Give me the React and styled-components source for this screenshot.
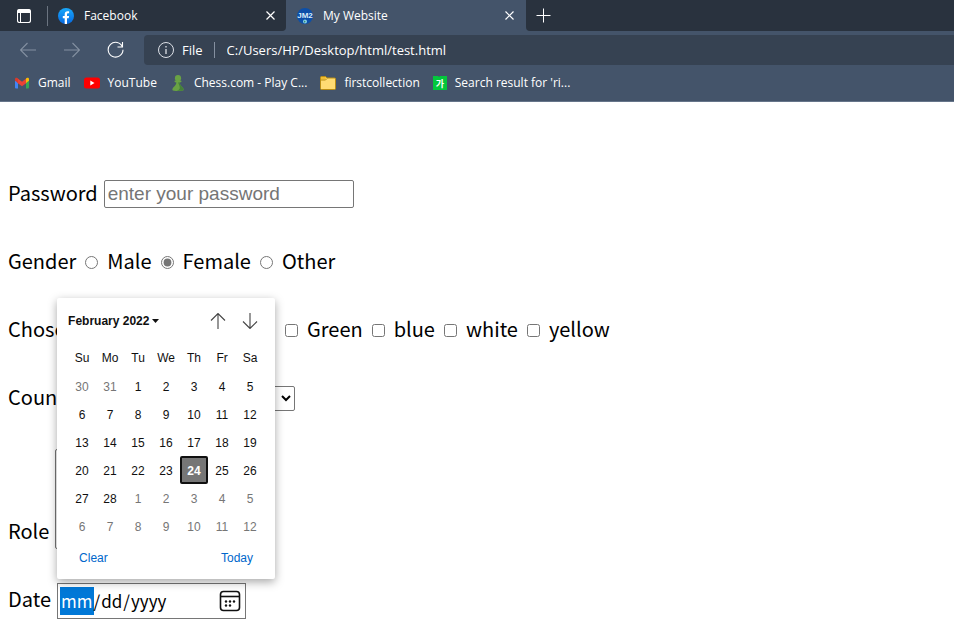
import React, { useState } from "react";
import styled, { createGlobalStyle } from "styled-components";

const GlobalStyle = createGlobalStyle`
  *, *::before, *::after { box-sizing: border-box; }
  body { margin: 0; background: #fff; overflow: hidden; }
`;

const uiFont = `"Open Sans", "Noto Sans", sans-serif`;
const pageFont = `"Noto Sans CJK SC", "Noto Sans", sans-serif`;
const formFont = `"Liberation Sans", Arial, sans-serif`;

const Browser = styled.div`
  display: flex;
  flex-direction: column;
  min-height: 100vh;
  background: #fff;
`;

const Chrome = styled.header`
  background: #44546a;
  border-bottom: 1px solid #66758a;
  color: #fff;
  font: 12px/16px ${uiFont};
`;

const TabStrip = styled.div`
  display: flex;
  height: 31px;
  background: #44546a;
`;

const IconButton = styled.button`
  display: flex;
  align-items: center;
  justify-content: center;
  width: ${(p) => p.$width || 24}px;
  height: 28px;
  padding: 0;
  border: 0;
  background: none;
  color: ${(p) => (p.$dim ? "#8490a1" : "#fff")};
`;

const LeadingTabs = styled.div`
  display: flex;
  align-items: center;
  width: 286px;
  padding: 0 4px 0 12px;
  background: #29323e;
  border-radius: 0 0 4px 0;
`;

const TabDivider = styled.span`
  width: 1px;
  height: 20px;
  margin: 0 10px 0 11px;
  background: #6b7480;
`;

const TabTitle = styled.span`
  flex: 1;
  margin-left: 10px;
  font-size: 12px;
`;

const ActiveTab = styled.div`
  display: flex;
  align-items: center;
  width: 240px;
  padding: 0 5px 0 11px;
  background: #44546a;
`;

const StripRest = styled.div`
  display: flex;
  flex: 1;
  align-items: center;
  padding-left: 5px;
  background: #29323e;
  border-radius: 0 0 0 4px;
`;

const Toolbar = styled.div`
  display: flex;
  align-items: center;
  height: 38px;
  padding-left: 16px;
`;

const NavButtons = styled.div`
  display: flex;
  gap: 20px;
  margin-right: 16px;
`;

const AddressBar = styled.div`
  display: flex;
  flex: 1;
  align-items: center;
  height: 30px;
  padding-left: 14px;
  background: #364252;
  border-radius: 4px 0 0 4px;
  font-size: 13px;
`;

const Scheme = styled.span`
  margin: 0 12px 0 8px;
  padding-right: 11px;
  border-right: 1px solid #8590a0;
`;

const AddressInput = styled.input`
  flex: 1;
  min-width: 0;
  padding: 0;
  border: 0;
  outline: 0;
  background: none;
  color: #fff;
  font: inherit;
`;

const Bookmarks = styled.nav`
  display: flex;
  gap: 13px;
  align-items: center;
  height: 32px;
  padding: 0 14px 4px;
`;

const Bookmark = styled.a`
  display: flex;
  gap: 8px;
  align-items: center;
  color: #fff;
  text-decoration: none;
  white-space: nowrap;
`;

const Form = styled.form`
  display: flex;
  flex-direction: column;
  gap: 34px;
  padding: 75px 8px 0;
  color: #000;
  font: 20px/28px ${pageFont};
`;

const Row = styled.div`
  display: flex;
  align-items: ${(p) => (p.$end ? "flex-end" : "center")};
  min-height: 34px;
`;

const RowLabel = styled.label`
  margin-right: 6px;
  padding-bottom: ${(p) => (p.$end ? 4 : 2)}px;
`;

const DateLabel = styled(RowLabel)`
  padding-bottom: 4px;
`;

const Choice = styled.label`
  display: flex;
  align-items: center;
  margin-right: 9px;
  padding-bottom: 2px;
`;

const ChoiceInput = styled.input`
  width: 13px;
  height: 13px;
  margin: 2px 9px 0 0;
  accent-color: #767676;
`;

const ColourLead = styled.div`
  display: flex;
  align-items: center;
  width: 277px;
  white-space: nowrap;
`;

const PasswordInput = styled.input`
  width: 250px;
  height: 28px;
  padding: 0 3px;
  border: 1px solid #767676;
  border-radius: 2px;
  font: 19px/24px ${formFont};
  &::placeholder { color: #757575; }
`;

const Select = styled.select`
  width: 205px;
  height: 25px;
  border: 1px solid #767676;
  border-radius: 2px;
  background: #fff;
  color: #000;
  font: 16px ${formFont};
`;

const TextArea = styled.textarea`
  width: 196px;
  height: 100px;
  border: 1px solid #767676;
  border-radius: 2px;
  resize: none;
`;

const DateField = styled.div`
  position: relative;
  display: flex;
  align-items: center;
  width: 189px;
  height: 36px;
  padding: 0 3px 0 2px;
  border: 1px solid #767676;
`;

const DateInput = styled.input`
  flex: 1;
  min-width: 0;
  height: 32px;
  padding: 0;
  border: 0;
  outline: 0;
  background: none;
  color: #000;
  font: 17px/28px ${pageFont};
  &::-webkit-calendar-picker-indicator { display: none; }
  &::-webkit-datetime-edit { padding: 0; }
  &::-webkit-datetime-edit-fields-wrapper { padding: 0; }
  &::-webkit-datetime-edit-month-field {
    padding: 3px 1px 6px;
    background: #0078d7;
    color: #fff;
  }
`;

const Popup = styled.div`
  position: absolute;
  bottom: 39px;
  left: -1px;
  width: 218px;
  padding: 7px 9px 8px 11px;
  background: #fff;
  border-radius: 2px;
  box-shadow: 0 3px 10px rgba(0, 0, 0, 0.35);
  font: 12px/16px ${formFont};
`;

const PopupHeader = styled.div`
  display: flex;
  align-items: center;
  height: 32px;
`;

const MonthButton = styled.button`
  display: flex;
  flex: 1;
  gap: 3px;
  align-items: center;
  padding: 0;
  border: 0;
  background: none;
  color: #101010;
  font: bold 12px/16px ${formFont};
`;

const Calendar = styled.table`
  margin-top: 5px;
  border-collapse: collapse;
  table-layout: fixed;
  width: 196px;
`;

const DayName = styled.th`
  height: 30px;
  padding: 2px 0 0;
  color: #101010;
  font-weight: normal;
`;

const DayCell = styled.td`
  height: 28px;
  padding: 0;
`;

const Day = styled.button`
  display: block;
  width: 28px;
  height: 28px;
  padding: 2px 0 0;
  border: ${(p) => (p.$selected ? "2px solid #101010" : "0")};
  border-radius: 2px;
  background: ${(p) => (p.$selected ? "#767676" : "none")};
  color: ${(p) => (p.$selected ? "#fff" : p.$outside ? "#767676" : "#101010")};
  font: ${(p) => (p.$selected ? "bold" : "normal")} 12px/16px ${formFont};
`;

const PopupFooter = styled.div`
  display: flex;
  justify-content: space-between;
  padding: 10px 13px 5px 11px;
`;

const TextButton = styled.button`
  padding: 0;
  border: 0;
  background: none;
  color: #0067cb;
  font: 12px/16px ${formFont};
`;

const CloseIcon = () => (
  <svg width="9" height="9" viewBox="0 0 9 9" fill="none" stroke="#fff" strokeWidth="1.2">
    <path d="M.5.5l8 8M8.500 .5l-8 8" />
  </svg>
);

const TabActionsIcon = () => (
  <svg width="14" height="14" viewBox="0 0 14 14" fill="none" stroke="#fff">
    <rect x=".5" y=".5" width="13" height="13" rx="2" strokeWidth="1.1" />
    <path d="M1 1h12v3H1z" fill="#fff" stroke="none" />
    <path d="M3.500 4v9.500" />
  </svg>
);

const FacebookIcon = () => (
  <svg width="16" height="16" viewBox="0 0 16 16">
    <defs>
      <linearGradient id="fb" x1="0" y1="0" x2="0" y2="1">
        <stop offset="0" stopColor="#19a9fb" />
        <stop offset="1" stopColor="#0668e1" />
      </linearGradient>
    </defs>
    <circle cx="8" cy="8" r="8" fill="url(#fb)" />
    <path d="M6.700 16V10.300H4.800V8h1.900V6.300c0-2 1.100-3.100 2.900-3.100.8 0 1.500.1 1.500.1v1.900h-.9c-.9 0-1.200.6-1.200 1.200V8h2.100l-.4 2.300H9V16z" fill="#fff" />
  </svg>
);

const SiteIcon = () => (
  <svg width="16" height="16" viewBox="0 0 16 16">
    <circle cx="8" cy="8" r="8" fill="#0c4fa8" />
    <text x="8" y="10" textAnchor="middle" fontFamily="Liberation Sans, sans-serif" fontWeight="bold" fontSize="8" fill="#d9ecf7">JM2</text>
    <circle cx="8" cy="13.5" r="2" fill="#8ad2e6" />
    <path d="M7 12.500l1.500 1-.8 1.500z" fill="#17754b" />
  </svg>
);

const PlusIcon = () => (
  <svg width="15" height="15" viewBox="0 0 15 15" stroke="#fff">
    <path d="M7.500 .5v14M.5 7.500h14" />
  </svg>
);

const ArrowIcon = ({ turn = 0, color = "currentColor" }) => (
  <svg width="16" height="16" viewBox="0 0 16 16" fill="none" stroke={color} strokeWidth="1.1">
    <path transform={`rotate(${turn} 8 8)`} d="M16 8H.8M7.500 1L.5 8l7 7" />
  </svg>
);

const ReloadIcon = () => (
  <svg width="18" height="18" viewBox="0 0 18 18" fill="none" stroke="#fff" strokeWidth="1.1">
    <path d="M15.500 6A7.400 7.400 0 1 0 16 8.800M15.500 1v5h-5" />
  </svg>
);

const InfoIcon = () => (
  <svg width="16" height="16" viewBox="0 0 16 16" fill="none" stroke="#dde1e7">
    <circle cx="8" cy="8" r="7.5" />
    <path d="M8 7v5M8 4v1.500" strokeWidth="1.3" />
  </svg>
);

const GmailIcon = () => (
  <svg width="16" height="16" viewBox="0 0 16 16">
    <path d="M1 4l3 2.500V13.500H2a1 1 0 0 1-1-1z" fill="#4285f4" />
    <path d="M15 4l-3 2.500V13.500h2a1 1 0 0 0 1-1z" fill="#34a853" />
    <path d="M3.500 3.200L8 6.700l4.500-3.500V8L8 11.200 3.500 8z" fill="#ea4335" />
    <path d="M1 4.200C1 2.700 2.500 2.400 3.300 3L4 3.600V8L1 5.800z" fill="#d93a2b" />
    <path d="M15 4.200c0-1.500-1.500-1.800-2.300-1.200l-.7.600V8l3-2.200z" fill="#fbbc04" />
  </svg>
);

const YouTubeIcon = () => (
  <svg width="16" height="16" viewBox="0 0 16 16">
    <rect y="2.5" width="16" height="11" rx="2.5" fill="#f00" />
    <path d="M6.300 5.600v4.800L10.500 8z" fill="#fff" />
  </svg>
);

const PawnIcon = () => (
  <svg width="16" height="16" viewBox="0 0 16 16">
    <g fill="#69a244">
      <circle cx="8" cy="3.2" r="3.1" />
      <path d="M4.800 5.500h6.400l.3 1.500-1.900.5c.2 1.800 1 3.100 2.400 4.200 1.200 1 1.600 2 1.600 3.200 0 1.300-11.200 1.300-11.200 0 0-1.200.4-2.200 1.600-3.200 1.400-1.100 2.200-2.400 2.400-4.200L4.500 7z" />
    </g>
    <path d="M9.600 7.500c.2 1.800 1 3.100 2.400 4.200 1.200 1 1.600 2 1.600 3.200-1 .8-4 .9-7 .8 4-.7 4-3.200 1.400-8.200z" fill="#45803a" />
  </svg>
);

const FolderIcon = () => (
  <svg width="16" height="14" viewBox="0 0 16 14">
    <path d="M.5 1.500a1 1 0 0 1 1-1h4l1.500 1.500h7.500a1 1 0 0 1 1 1v9.500a1 1 0 0 1-1 1h-13a1 1 0 0 1-1-1z" fill="#ffdc73" stroke="#b98d13" />
    <path d="M1 1h4.300l1 1L5 3.500H1z" fill="#f0bd31" />
    <path d="M1 4h4.500L7 2.500" fill="none" stroke="#b98d13" />
  </svg>
);

const KoreanIcon = () => (
  <svg width="14" height="14" viewBox="0 0 14 14">
    <path d="M0 0h5l1 1 1-1h7v14H0z" fill="#03c73c" />
    <text x="7" y="10.5" textAnchor="middle" fontFamily="Noto Sans CJK KR, sans-serif" fontWeight="bold" fontSize="9" fill="#fff">가</text>
  </svg>
);

const CaretIcon = () => (
  <svg width="7" height="4" viewBox="0 0 7 4">
    <path d="M0 0h7L3.500 4z" fill="#101010" />
  </svg>
);

const CalendarIcon = () => (
  <svg width="22" height="22" viewBox="0 0 22 22" fill="none" stroke="#101010" strokeWidth="1.6">
    <rect x="1.5" y="1.5" width="19" height="19" rx="3" />
    <path d="M1.500 6.500h19" />
    <g fill="#101010" stroke="none">
      <circle cx="7" cy="11.5" r="1.2" />
      <circle cx="11" cy="11.5" r="1.2" />
      <circle cx="15" cy="11.5" r="1.2" />
      <circle cx="7" cy="15.5" r="1.2" />
      <circle cx="11" cy="15.5" r="1.2" />
    </g>
  </svg>
);

const bookmarks = [
  { name: "Gmail", Icon: GmailIcon },
  { name: "YouTube", Icon: YouTubeIcon },
  { name: "Chess.com - Play C...", Icon: PawnIcon },
  { name: "firstcollection", Icon: FolderIcon },
  { name: "Search result for 'ri...", Icon: KoreanIcon },
];

const dayNames = ["Su", "Mo", "Tu", "We", "Th", "Fr", "Sa"];
const weeks = Array.from({ length: 6 }, (_, week) =>
  Array.from({ length: 7 }, (_, day) => {
    const date = new Date(2022, 0, 30 + week * 7 + day);
    return { number: date.getDate(), outside: date.getMonth() !== 1 };
  })
);

function DatePopup() {
  const [selected, setSelected] = useState(24);
  return (
    <Popup role="dialog" aria-label="Choose a date">
      <PopupHeader>
        <MonthButton type="button">February 2022 <CaretIcon /></MonthButton>
        <IconButton type="button" $width={32} aria-label="Previous month">
          <ArrowIcon turn={90} color="#444" />
        </IconButton>
        <IconButton type="button" $width={32} aria-label="Next month">
          <ArrowIcon turn={-90} color="#444" />
        </IconButton>
      </PopupHeader>
      <Calendar>
        <thead>
          <tr>{dayNames.map((name) => <DayName key={name} scope="col">{name}</DayName>)}</tr>
        </thead>
        <tbody>
          {weeks.map((week, i) => (
            <tr key={i}>
              {week.map((day) => (
                <DayCell key={day.number}>
                  <Day
                    type="button"
                    $outside={day.outside}
                    $selected={!day.outside && day.number === selected}
                    onClick={() => setSelected(day.number)}
                  >
                    {day.number}
                  </Day>
                </DayCell>
              ))}
            </tr>
          ))}
        </tbody>
      </Calendar>
      <PopupFooter>
        <TextButton type="button">Clear</TextButton>
        <TextButton type="button">Today</TextButton>
      </PopupFooter>
    </Popup>
  );
}

export default function App() {
  return (
    <Browser>
      <GlobalStyle />
      <Chrome>
        <TabStrip>
          <LeadingTabs>
            <IconButton aria-label="Tab actions"><TabActionsIcon /></IconButton>
            <TabDivider />
            <FacebookIcon />
            <TabTitle>Facebook</TabTitle>
            <IconButton aria-label="Close Facebook"><CloseIcon /></IconButton>
          </LeadingTabs>
          <ActiveTab>
            <SiteIcon />
            <TabTitle>My Website</TabTitle>
            <IconButton aria-label="Close My Website"><CloseIcon /></IconButton>
          </ActiveTab>
          <StripRest>
            <IconButton aria-label="New tab"><PlusIcon /></IconButton>
          </StripRest>
        </TabStrip>
        <Toolbar>
          <NavButtons>
            <IconButton $dim aria-label="Back"><ArrowIcon /></IconButton>
            <IconButton $dim aria-label="Forward"><ArrowIcon turn={180} /></IconButton>
            <IconButton aria-label="Refresh"><ReloadIcon /></IconButton>
          </NavButtons>
          <AddressBar>
            <InfoIcon />
            <Scheme>File</Scheme>
            <AddressInput aria-label="Address" defaultValue="C:/Users/HP/Desktop/html/test.html" />
          </AddressBar>
        </Toolbar>
        <Bookmarks aria-label="Favorites">
          {bookmarks.map(({ name, Icon }) => (
            <Bookmark key={name} href="#"><Icon />{name}</Bookmark>
          ))}
        </Bookmarks>
      </Chrome>
      <Form>
        <Row>
          <RowLabel htmlFor="password">Password</RowLabel>
          <PasswordInput id="password" type="password" placeholder="enter your password" />
        </Row>
        <Row role="radiogroup" aria-label="Gender">
          <Choice as="span">Gender</Choice>
          <Choice><ChoiceInput type="radio" name="gender" />Male</Choice>
          <Choice><ChoiceInput type="radio" name="gender" defaultChecked />Female</Choice>
          <Choice><ChoiceInput type="radio" name="gender" />Other</Choice>
        </Row>
        <Row role="group" aria-label="Chose color">
          <ColourLead>
            <Choice as="span">Chose color</Choice>
            <Choice><ChoiceInput type="checkbox" />Red</Choice>
          </ColourLead>
          <Choice><ChoiceInput type="checkbox" />Green</Choice>
          <Choice><ChoiceInput type="checkbox" />blue</Choice>
          <Choice><ChoiceInput type="checkbox" />white</Choice>
          <Choice><ChoiceInput type="checkbox" />yellow</Choice>
        </Row>
        <Row>
          <RowLabel htmlFor="country">Country</RowLabel>
          <Select id="country"><option></option></Select>
        </Row>
        <Row $end>
          <RowLabel htmlFor="role" $end>Role</RowLabel>
          <TextArea id="role" />
        </Row>
        <Row>
          <DateLabel htmlFor="date">Date</DateLabel>
          <DateField>
            <DateInput id="date" type="date" />
            <IconButton type="button" aria-label="Show date picker"><CalendarIcon /></IconButton>
            <DatePopup />
          </DateField>
        </Row>
      </Form>
    </Browser>
  );
}
